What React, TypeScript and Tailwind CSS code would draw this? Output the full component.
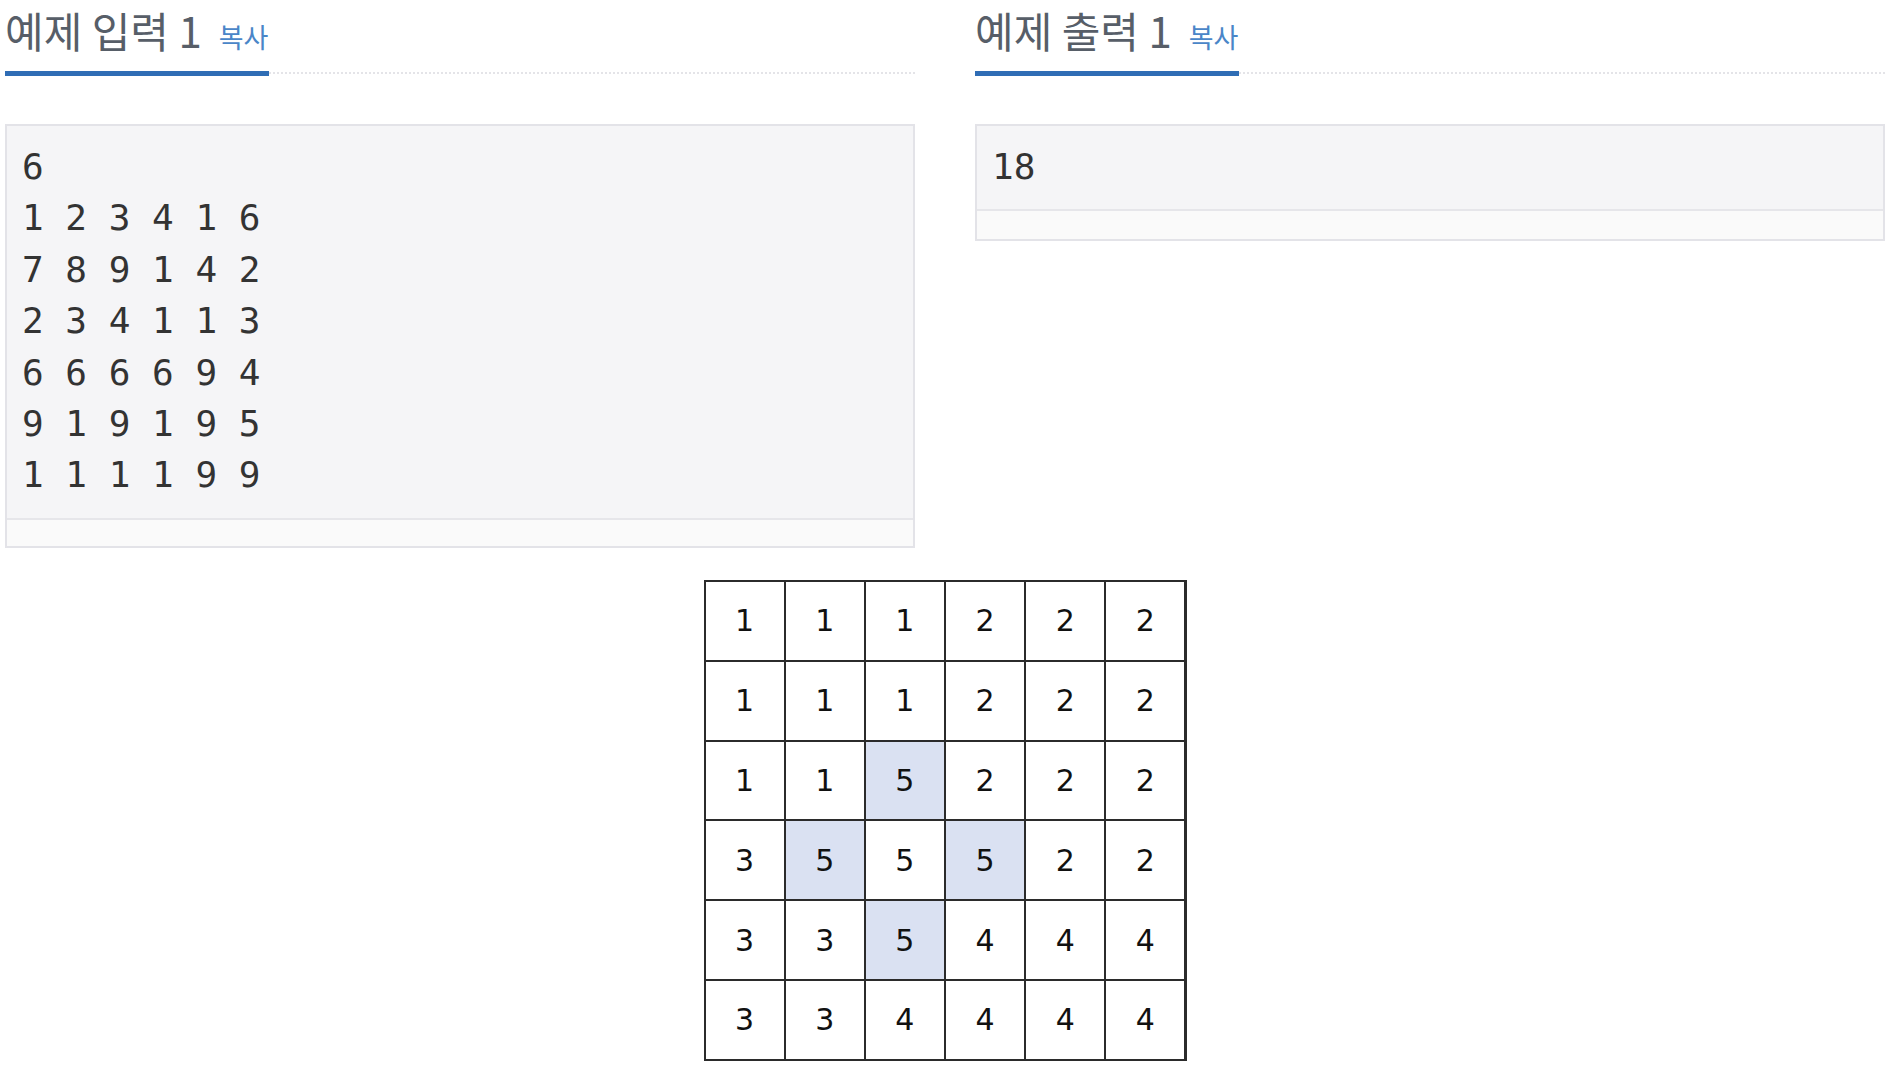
import React from "react";

const inputLines = ["6", "1 2 3 4 1 6", "7 8 9 1 4 2", "2 3 4 1 1 3", "6 6 6 6 9 4", "9 1 9 1 9 5", "1 1 1 1 9 9"];

const grid = [
  [1, 1, 1, 2, 2, 2],
  [1, 1, 1, 2, 2, 2],
  [1, 1, 5, 2, 2, 2],
  [3, 5, 5, 5, 2, 2],
  [3, 3, 5, 4, 4, 4],
  [3, 3, 4, 4, 4, 4],
];
const hl = new Set(["2-2", "3-1", "3-3", "4-2"]);

function Header({ title }: { title: string }) {
  return (
    <div>
      <div className="h-[71px] pt-[9px] whitespace-nowrap">
        <span className="text-[42px] leading-[42px] text-[#575e68] font-['Noto_Sans_CJK_KR',sans-serif]">{title}</span>
        <span className="ml-[17px] text-[27px] leading-[42px] text-[#4a86c8] font-['Noto_Sans_CJK_KR',sans-serif]">복사</span>
      </div>
      <div className="flex items-start">
        <div className="w-[264px] h-[5px] bg-[#2f6db5]" />
        <div className="flex-1 mt-[1px] border-t-2 border-dotted border-[#e4e4e8]" />
      </div>
    </div>
  );
}

function Box({ lines, strip }: { lines: string[]; strip: string }) {
  return (
    <div className="mt-[48px] border-2 border-[#e3e3e8] bg-[#f5f5f7]">
      <div className="pl-[15px] pt-[15px] pb-[17px] text-[36px] leading-[51.4px] text-[#333] font-['DejaVu_Sans_Mono',monospace] whitespace-pre">
        {lines.map((l, i) => (
          <div key={i}>{l}</div>
        ))}
      </div>
      <div className={`${strip} border-t-2 border-[#e6e6ea] bg-[#fafafa]`} />
    </div>
  );
}

export default function App() {
  return (
    <div className="bg-white min-h-[1076px] pl-[5px] pr-[13px]">
      <div className="flex gap-[60px] items-start">
        <div className="w-[910px]">
          <Header title="예제 입력 1" />
          <Box lines={inputLines} strip="h-[28px]" />
        </div>
        <div className="w-[910px]">
          <Header title="예제 출력 1" />
          <Box lines={["18"]} strip="h-[30px]" />
        </div>
      </div>
      <div className="flex justify-center mt-[32px]">
        <div className="grid grid-cols-6 grid-rows-6 gap-[2px] p-[2px] bg-[#2b2b2b] w-[483px] h-[481px]">
          {grid.map((row, r) =>
            row.map((v, c) => (
              <div
                key={`${r}-${c}`}
                className={`flex items-center justify-center text-[30px] text-[#111] font-['DejaVu_Sans',sans-serif] ${hl.has(`${r}-${c}`) ? "bg-[#dae1f2]" : "bg-white"}`}
              >
                {v}
              </div>
            ))
          )}
        </div>
      </div>
    </div>
  );
}
